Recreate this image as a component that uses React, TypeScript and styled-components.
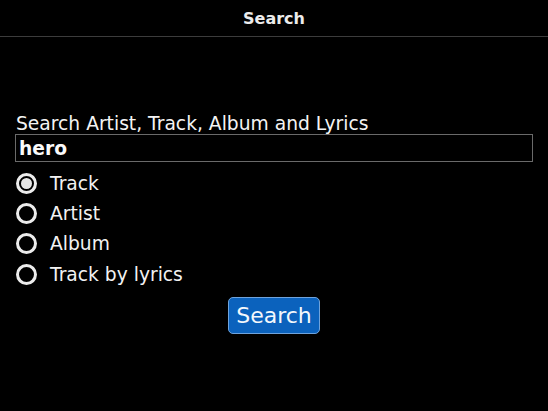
import React, { useState } from "react";
import styled, { createGlobalStyle } from "styled-components";

const Global = createGlobalStyle`
  html, body {
    margin: 0;
    padding: 0;
    background: #000;
  }
  body {
    font-family: "DejaVu Sans", "Liberation Sans", sans-serif;
    color: #f2f2f2;
  }
`;

const Screen = styled.div`
  width: 548px;
  height: 411px;
  background: #000;
  display: flex;
  flex-direction: column;
  overflow: hidden;
`;

const TitleBar = styled.header`
  height: 36px;
  border-bottom: 1px solid #3c3c3c;
  display: flex;
  align-items: center;
  justify-content: center;
  font-size: 16px;
  font-weight: bold;
  color: #ececec;
  box-sizing: content-box;
`;

const Content = styled.main`
  display: flex;
  flex-direction: column;
  padding: 76px 15px 0 15px;
`;

const Label = styled.label`
  font-size: 18.7px;
  line-height: 22px;
  padding-left: 1px;
  color: #f4f4f4;
`;

const Field = styled.input`
  margin-top: -1px;
  height: 28px;
  box-sizing: border-box;
  border: 1px solid #6a6a6a;
  background: #000;
  color: #fafafa;
  font-family: "DejaVu Sans", "Liberation Sans", sans-serif;
  font-size: 18.7px;
  font-weight: bold;
  padding: 0 3px 0 3px;
  outline: none;
  width: 100%;
`;

const Options = styled.div`
  display: flex;
  flex-direction: column;
  margin-top: 6px;
`;

const OptionRow = styled.label`
  height: 30.3px;
  display: flex;
  align-items: center;
  font-size: 18.7px;
  color: #f2f2f2;
  cursor: pointer;
`;

const RadioCircle = styled.span<{ $checked: boolean }>`
  width: 21px;
  height: 21px;
  box-sizing: border-box;
  margin-left: 1px;
  margin-right: 13px;
  border: 3px solid #ececec;
  border-radius: 50%;
  display: flex;
  align-items: center;
  justify-content: center;
  &::after {
    content: "";
    display: ${(p) => (p.$checked ? "block" : "none")};
    width: 11px;
    height: 11px;
    border-radius: 50%;
    background: #e6e6e6;
  }
`;

const ButtonRow = styled.div`
  display: flex;
  justify-content: center;
  margin-top: 8px;
`;

const SearchButton = styled.button`
  width: 92px;
  height: 37px;
  box-sizing: border-box;
  border: 1px solid #6fa3dc;
  border-radius: 5px;
  background: #0b62bd;
  color: #f4f8fc;
  font-family: "DejaVu Sans", "Liberation Sans", sans-serif;
  font-size: 22px;
  padding: 0;
  line-height: 1;
  cursor: pointer;
`;

const options = ["Track", "Artist", "Album", "Track by lyrics"];

export default function App() {
  const [query, setQuery] = useState("hero");
  const [selected, setSelected] = useState("Track");
  return (
    <Screen>
      <Global />
      <TitleBar>Search</TitleBar>
      <Content>
        <Label htmlFor="q">Search Artist, Track, Album and Lyrics</Label>
        <Field id="q" value={query} onChange={(e) => setQuery(e.target.value)} />
        <Options>
          {options.map((o) => (
            <OptionRow key={o} onClick={() => setSelected(o)}>
              <RadioCircle $checked={selected === o} />
              {o}
            </OptionRow>
          ))}
        </Options>
        <ButtonRow>
          <SearchButton>Search</SearchButton>
        </ButtonRow>
      </Content>
    </Screen>
  );
}
